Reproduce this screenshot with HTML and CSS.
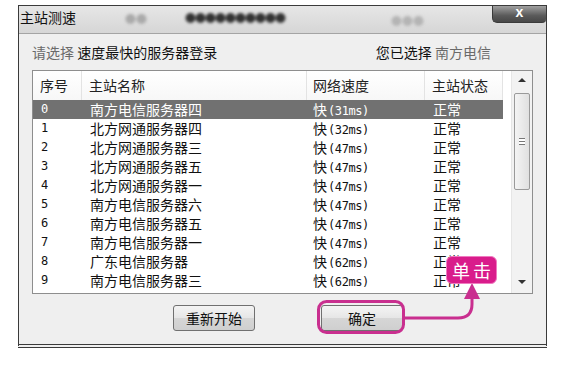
FILE: index.html
```html
<!DOCTYPE html>
<html><head>
  <meta charset="utf-8">
  <title>主站测速</title>
  <link rel="stylesheet" href="styles.css">
</head>
<body>

<div class="window">
  <div class="titlebar">
    <span class="title">主站测速</span>
    <span class="blur b1">●●</span>
    <span class="blur b2">●●●●●●●●●●</span>
    <span class="blur b3">●●●</span>
    <span class="close">x</span>
  </div>

  <div class="content">
    <div class="prompt">
      <span class="dim">请选择</span>&nbsp;<span>速度最快的服务器登录</span>
      <span class="picked"><span>您已选择</span>&nbsp;<span class="dim">南方电信</span></span>
    </div>

    <div class="list">
      <div class="table">
        <div class="row head">
          <span>序号</span><span>主站名称</span><span>网络速度</span><span>主站状态</span>
        </div>
        <div class="row sel"><span class="num">0</span><span>南方电信服务器四</span><span>快<i>(31ms)</i></span><span>正常</span></div>
        <div class="row"><span class="num">1</span><span>北方网通服务器四</span><span>快<i>(32ms)</i></span><span>正常</span></div>
        <div class="row"><span class="num">2</span><span>北方网通服务器三</span><span>快<i>(47ms)</i></span><span>正常</span></div>
        <div class="row"><span class="num">3</span><span>北方网通服务器五</span><span>快<i>(47ms)</i></span><span>正常</span></div>
        <div class="row"><span class="num">4</span><span>北方网通服务器一</span><span>快<i>(47ms)</i></span><span>正常</span></div>
        <div class="row"><span class="num">5</span><span>南方电信服务器六</span><span>快<i>(47ms)</i></span><span>正常</span></div>
        <div class="row"><span class="num">6</span><span>南方电信服务器五</span><span>快<i>(47ms)</i></span><span>正常</span></div>
        <div class="row"><span class="num">7</span><span>南方电信服务器一</span><span>快<i>(47ms)</i></span><span>正常</span></div>
        <div class="row"><span class="num">8</span><span>广东电信服务器</span><span>快<i>(62ms)</i></span><span>正常</span></div>
        <div class="row"><span class="num">9</span><span>南方电信服务器三</span><span>快<i>(62ms)</i></span><span>正常</span></div>
      </div>
      <div class="scrollbar">
        <span class="arrow up"></span>
        <span class="thumb"><span class="grip"></span></span>
        <span class="arrow down"></span>
      </div>
    </div>
  </div>

  <div class="buttons">
    <button class="btn">重新开始</button>
    <button class="btn">确定</button>
  </div>
</div>

<!-- annotation overlay -->
<svg class="overlay" width="588" height="373" viewBox="0 0 588 373">
  <rect x="318.5" y="301.5" width="85" height="31" rx="8" fill="none" stroke="#c92f8f" stroke-width="3"/>
  <path d="M404 318 H458 Q472 318 472 304 V296" fill="none" stroke="#c92f8f" stroke-width="3"/>
  <polygon points="472,283 464,299 480,299" fill="#c92f8f"/>
</svg>
<div class="tag">单击</div>

</body>
</html>
```

FILE: styles.css
```css
html, body {
  margin: 0; padding: 0; background: #fff;
  font-family: "Noto Sans CJK SC", "Liberation Sans", sans-serif;
  color: #111;
}
body { width: 588px; height: 373px; overflow: hidden; position: relative; }

.window {
  margin: 5px 0 0 18px;
  width: 527px;
  border: 1px solid #3a3a3a;
  border-bottom: 4px double #3a3a3a;
  background: #efefef;
}

.titlebar {
  position: relative;
  height: 27px;
  display: flex;
  align-items: flex-start;
  background: linear-gradient(#e6e6e6, #d6d6d6);
  border-bottom: 1px solid #a4a4a4;
}
.title { font-size: 14px; line-height: 16px; padding: 3px 0 0 1px; }
.blur { position: absolute; filter: blur(1.6px); font-size: 11px; line-height: 12px; }
.b1 { left: 106px; top: 6px; color: #aaa; }
.b2 { left: 166px; top: 5px; color: #333; letter-spacing: -1px; }
.b3 { left: 372px; top: 8px; color: #b4b4b4; }
.close {
  margin-left: auto;
  width: 54px; height: 17px;
  border-radius: 0 0 4px 5px;
  background: linear-gradient(#a0a0a0, #5a5a5a 60%, #474747);
  border-left: 1px solid #3a3a3a;
  border-bottom: 1px solid #3a3a3a;
  color: #fff; font-family: "Liberation Sans", sans-serif; font-weight: bold;
  font-size: 14px; line-height: 12px; text-align: center;
  box-sizing: border-box;
}

.content { padding: 0 13px; }
.prompt {
  height: 36px;
  display: flex; align-items: center;
  font-size: 14px;
}
.dim { color: #6a6a6a; }
.picked { margin-left: auto; margin-right: 42px; }

.list {
  display: flex;
  height: 224px;
  box-sizing: border-box;
  border: 1px solid #8e8e8e;
  background: #fff;
}
.table { flex: 1; }
.row {
  display: grid;
  grid-template-columns: 49px 225px 118px 78px;
  width: 470px;
  height: 19px;
  font-size: 14px; line-height: 19px;
}
.row > span { padding-left: 8px; white-space: nowrap; }
.row > span:nth-child(3) { padding-left: 6px; }
.row .num { font-family: "DejaVu Sans Mono", monospace; font-size: 12px; }
.row i { font-style: normal; font-family: "DejaVu Sans Mono", monospace; font-size: 12px; letter-spacing: -0.4px; padding-left: 1px; }
.head { height: 29px; line-height: 29px; background: linear-gradient(#fff, #f7f7f7); }
.head span { border-right: 1px solid #e3e3e3; padding-left: 7px; color: #222; }
.sel { background: #717171; color: #fff; }

.scrollbar {
  width: 20px;
  background: #f2f2f2;
  border-left: 1px solid #e6e6e6;
  display: flex; flex-direction: column; align-items: center;
}
.arrow { width: 0; height: 0; border-left: 4px solid transparent; border-right: 4px solid transparent; }
.up { margin-top: 7px; border-bottom: 4px solid #333; }
.down { margin-top: auto; margin-bottom: 9px; border-top: 4px solid #333; }
.thumb {
  margin-top: 11px;
  width: 16px; height: 97px;
  box-sizing: border-box;
  border: 1px solid #9a9a9a; border-radius: 2px;
  background: linear-gradient(90deg, #f4f4f4, #e0e0e0);
  display: flex; align-items: center; justify-content: center;
}
.grip {
  width: 6px; height: 5px;
  border-top: 1px solid #777; border-bottom: 1px solid #777;
  background: linear-gradient(#fff 40%, #777 40%, #777 60%, #fff 60%);
}

.buttons {
  height: 50px;
  display: flex; align-items: flex-start;
  padding: 11px 0 0 154px;
  box-sizing: border-box;
  gap: 66px;
}
.btn {
  width: 82px; height: 26px;
  border: 1px solid #707070; border-radius: 3px;
  background: linear-gradient(#f4f4f4, #e6e6e6 50%, #d6d6d6 51%, #cfcfcf);
  font-family: "Noto Sans CJK SC", sans-serif; font-size: 14px; color: #111;
  padding: 0;
}

.overlay { position: absolute; left: 0; top: 0; pointer-events: none; }
.tag {
  position: absolute; left: 446px; top: 256px;
  width: 51px; height: 28px;
  box-sizing: border-box;
  background: #d91c8b;
  border: 1px solid #f07ac0;
  border-radius: 6px;
  color: #fff; font-size: 18px; line-height: 26px; letter-spacing: 3px;
  text-align: center;
  padding-left: 3px;
}
```
